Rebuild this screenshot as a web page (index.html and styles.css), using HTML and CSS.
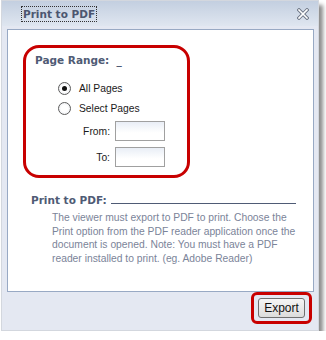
FILE: index.html
```html
<!DOCTYPE html>
<html lang="en">
<head>
  <meta charset="UTF-8">
  <title>Print to PDF</title>
  <link rel="stylesheet" href="styles.css">
</head>
<body>

  <div class="dialog">
    <div class="titlebar">
      <span class="title">Print to PDF</span>
      <svg class="close" width="12" height="12" viewBox="0 0 12 12">
        <path d="M2 2 L10 10 M10 2 L2 10" stroke="#6b7484" stroke-width="3.4" stroke-linecap="square"/>
        <path d="M2 2 L10 10 M10 2 L2 10" stroke="#ffffff" stroke-width="1.6" stroke-linecap="square"/>
      </svg>
    </div>

    <div class="panel">
      <!-- page range -->
      <div class="range">
        <div class="heading">Page Range:&nbsp; _</div>
        <div class="option"><span class="radio checked"></span>All Pages</div>
        <div class="option"><span class="radio"></span>Select Pages</div>
        <div class="field"><label>From:</label><span class="box"></span></div>
        <div class="field"><label>To:</label><span class="box"></span></div>
      </div>

      <div class="print-row">
        <span class="heading">Print to PDF:</span>
        <span class="rule"></span>
      </div>

      <p class="note">The viewer must export to PDF to print. Choose the Print option from the PDF reader application once the document is opened. Note: You must have a PDF reader installed to print. (eg. Adobe Reader)</p>
    </div>

    <div class="footer">
      <div class="export-wrap">
        <button class="export">Export</button>
      </div>
    </div>
  </div>

</body>
</html>
```

FILE: styles.css
```css
body {
  margin: 0;
  background: #ffffff;
  font-family: 'Liberation Sans', Arial, sans-serif;
  font-size: 10.3px;
}

.dialog {
  width: 316px;
  height: 329px;
  margin: 0 0 0 1px;
  border: 1px solid #d3d7de;
  background: #e4e8f2;
  box-shadow: 4px 5px 4px rgba(0, 0, 0, 0.45);
  display: flex;
  flex-direction: column;
}

.titlebar {
  height: 25px;
  background: linear-gradient(to bottom, #c3cfe0, #dfe6f0);
  display: flex;
  align-items: center;
  justify-content: space-between;
  padding: 0 9px 0 20px;
}

.title {
  font-family: 'DejaVu Sans', sans-serif;
  font-size: 10.5px;
  font-weight: bold;
  color: #4c5670;
  outline: 1px dotted #333;
  padding: 1px 1px;
}

.close {
  display: block;
}

.panel {
  margin: 3px 4px 0 5px;
  height: 261px;
  border: 1px solid #98a9c4;
  background: #ffffff;
}

.range {
  width: 161px;
  height: 127px;
  margin: 15px 0 0 15px;
  border: 3px solid #c80000;
  border-radius: 16px;
}

.heading {
  font-family: 'DejaVu Sans', sans-serif;
  font-size: 10.5px;
  font-weight: bold;
  color: #4f5b75;
}

.range .heading {
  display: block;
  margin: 6px 0 0 9px;
}

.option {
  display: flex;
  align-items: center;
  margin: 0 0 0 32px;
  height: 20px;
  color: #1a1a1a;
}

.range .heading + .option {
  margin-top: 12px;
}

.radio {
  width: 11px;
  height: 11px;
  border: 1px solid #5c5c5c;
  border-radius: 50%;
  background: radial-gradient(circle, #ffffff 40%, #e4e6ea);
  margin-right: 8px;
  position: relative;
}

.radio.checked::after {
  content: "";
  position: absolute;
  left: 3px;
  top: 3px;
  width: 5px;
  height: 5px;
  border-radius: 50%;
  background: #111;
}

.field {
  display: flex;
  align-items: center;
  justify-content: flex-end;
  width: 139px;
  margin-top: 3px;
}

.field + .field {
  margin-top: 6px;
}

.field label {
  margin-right: 5px;
  color: #1a1a1a;
}

.box {
  width: 48px;
  height: 18px;
  border: 1px solid #a0a0a0;
  background: linear-gradient(to bottom, #e9eef6, #ffffff 60%);
}

.print-row {
  display: flex;
  align-items: flex-end;
  margin: 16px 17px 0 23px;
}

.rule {
  flex: 1;
  border-bottom: 1px solid #4f5b75;
  margin: 0 0 2px 4px;
}

.note {
  margin: 5px 10px 0 44px;
  color: #7b8499;
  line-height: 13.5px;
}

.footer {
  flex: 1;
  display: flex;
  justify-content: flex-end;
  align-items: flex-start;
  padding: 0 6px 0 0;
}

.export-wrap {
  border: 3px solid #c80000;
  border-radius: 6px;
  padding: 3px 4px;
}

.export {
  display: block;
  width: 47px;
  height: 20px;
  font-family: 'Liberation Sans', Arial, sans-serif;
  font-size: 12px;
  color: #111;
  border: 1px solid #707070;
  border-radius: 3px;
  background: linear-gradient(to bottom, #f6f6f6, #dcdcdc);
  padding: 0;
}
```
